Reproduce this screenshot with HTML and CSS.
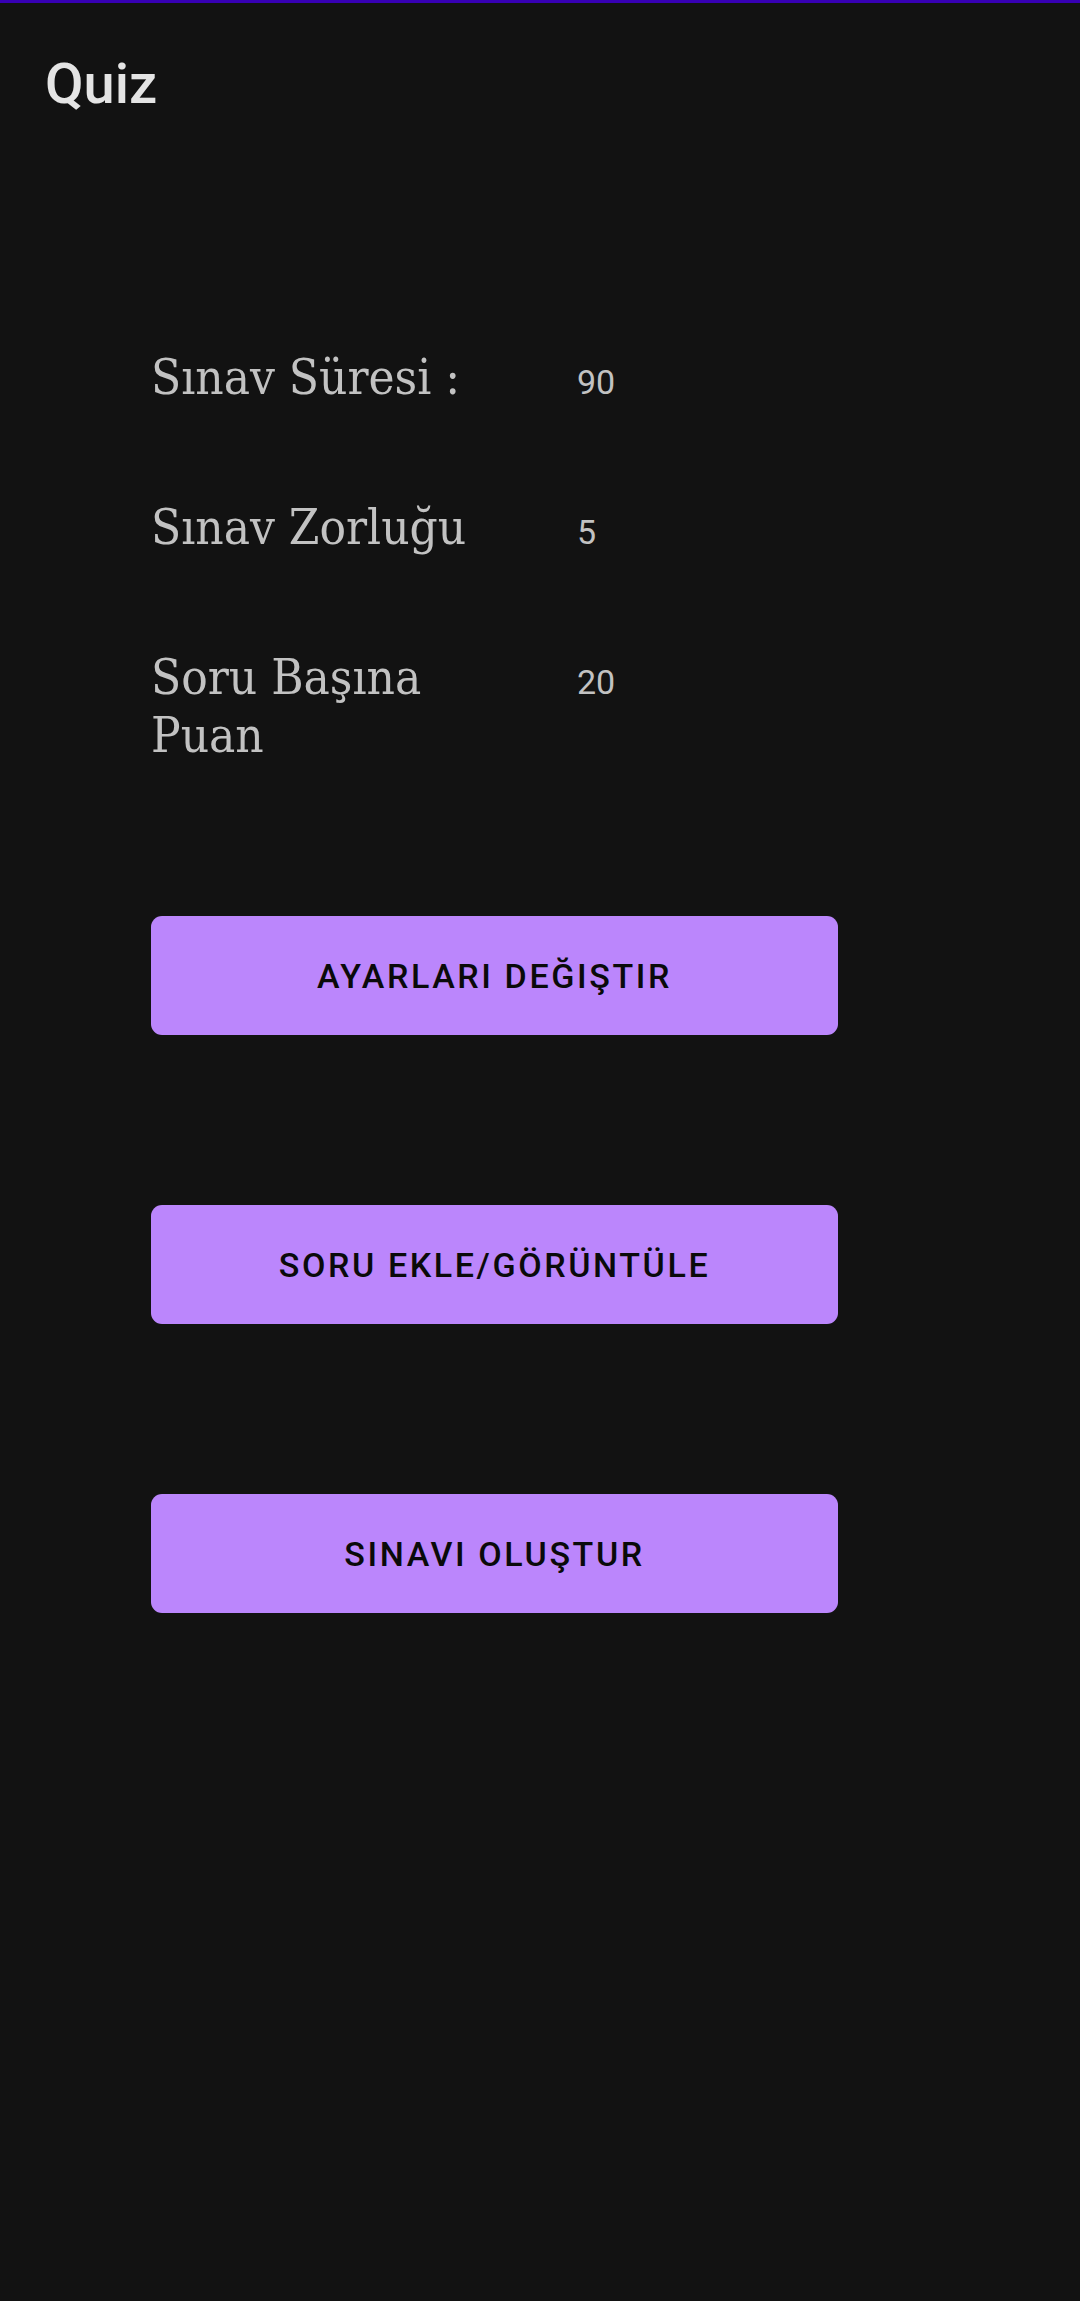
FILE: index.html
```html
<!DOCTYPE html>
<html lang="tr">
<head>
<meta charset="utf-8">
<title>Quiz</title>
<link rel="stylesheet" href="styles.css">
</head>
<body>
<div class="statusline"></div>
<header class="appbar">
  <h1 class="title">Quiz</h1>
</header>
<main class="content">
  <section class="settings">
    <div class="row">
      <div class="label">Sınav Süresi :</div>
      <div class="value">90</div>
    </div>
    <div class="row">
      <div class="label">Sınav Zorluğu</div>
      <div class="value">5</div>
    </div>
    <div class="row">
      <div class="label">Soru Başına Puan</div>
      <div class="value">20</div>
    </div>
  </section>
  <section class="actions">
    <button class="btn">AYARLARI DEĞIŞTIR</button>
    <button class="btn">SORU EKLE/GÖRÜNTÜLE</button>
    <button class="btn">SINAVI OLUŞTUR</button>
  </section>
</main>
</body>
</html>
```
FILE: styles.css
```css
* { box-sizing: border-box; }
html, body {
  margin: 0;
  padding: 0;
  background: #121212;
  min-height: 2301px;
}
.statusline {
  height: 3px;
  background: #3700b3;
}
.appbar {
  height: 154px;
  display: flex;
  align-items: center;
  padding: 8px 0 0 45px;
}
.title {
  margin: 0;
  font-family: Roboto, "Noto Sans", sans-serif;
  font-weight: 500;
  font-size: 56px;
  line-height: 66px;
  color: #e4e4e4;
}
.content {
  padding: 192px 0 0 151px;
}
.settings {
  display: flex;
  flex-direction: column;
  gap: 92px;
}
.row {
  display: flex;
  align-items: baseline;
}
.label {
  width: 426px;
  padding-right: 40px;
  font-family: "DejaVu Serif", serif;
  font-stretch: condensed;
  font-size: 49px;
  line-height: 58px;
  color: #c2c2c2;
}
.value {
  font-family: Roboto, "Noto Sans", sans-serif;
  font-size: 34px;
  color: #c2c2c2;
}
.actions {
  display: flex;
  flex-direction: column;
  gap: 170px;
  margin-top: 151px;
}
.btn {
  width: 687px;
  height: 119px;
  border: 0;
  border-radius: 11px;
  background: #bb86fc;
  color: #0a0a0a;
  font-family: Roboto, "Noto Sans", sans-serif;
  font-weight: 500;
  font-size: 34px;
  letter-spacing: 2.6px;
  padding: 0;
}
```
